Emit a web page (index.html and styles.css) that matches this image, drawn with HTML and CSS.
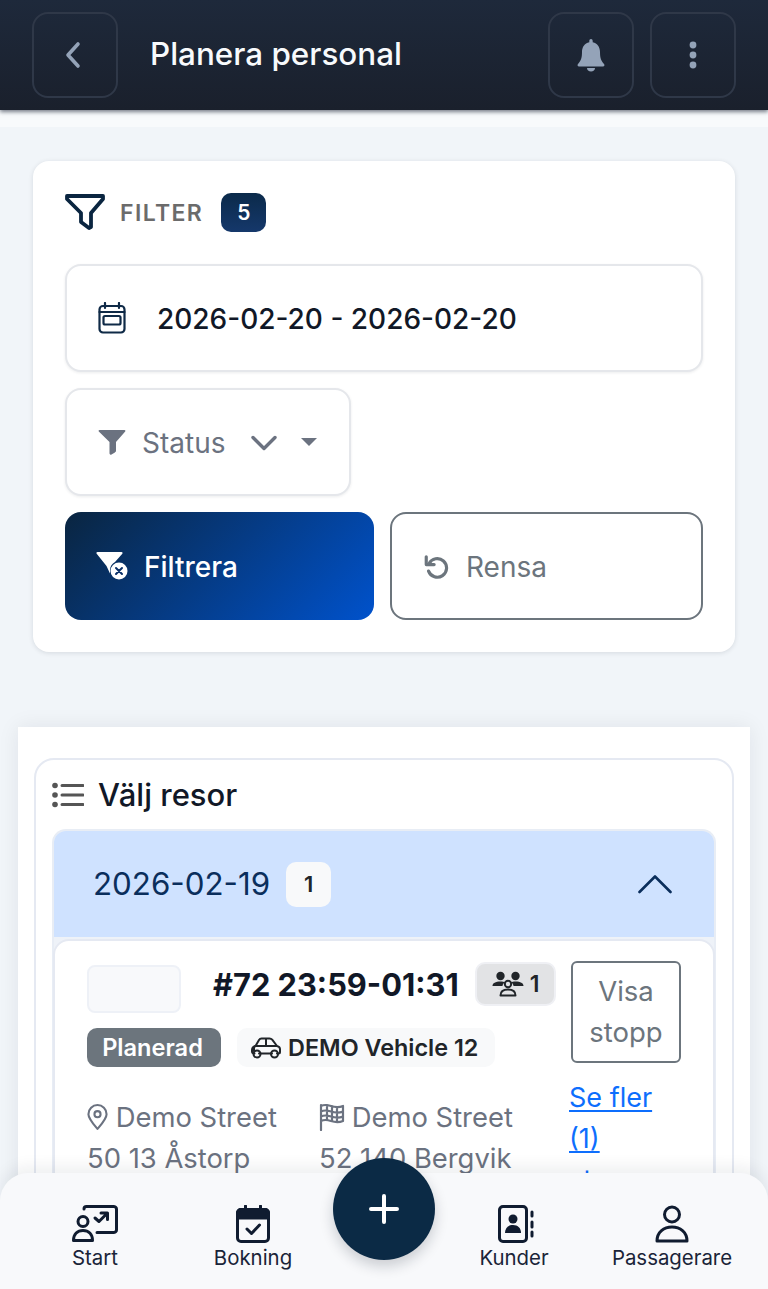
FILE: index.html
```html
<!DOCTYPE html>
<html lang="sv">
<head>
<meta charset="utf-8">
<title>Planera personal</title>
<link rel="stylesheet" href="styles.css">
</head>
<body>
<div class="app">
  <header class="topbar">
    <button class="icon-btn"><svg class="i-back" viewBox="0 0 16 28"><path d="M13 3 3 14l10 11"/></svg></button>
    <h1 class="page-title">Planera personal</h1>
    <button class="icon-btn"><svg class="i-bell" viewBox="0 0 30 34"><path d="M15 1c1 0 1.700.8 1.700 2v1.300C21.500 5.300 24 9.400 24 14c0 6 1 8.500 4 12 .9 1.100.4 2.500-1 2.500H3c-1.400 0-1.900-1.400-1-2.500 3-3.500 4-6 4-12 0-4.600 2.500-8.700 7.300-9.700V3c0-1.200.7-2 1.700-2Z"/><path d="M11 30h8c0 2-1.700 3.500-4 3.500s-4-1.500-4-3.500Z"/></svg></button>
    <button class="icon-btn"><svg class="i-dots" viewBox="0 0 8 28"><circle cx="4" cy="4" r="3.400"/><circle cx="4" cy="14" r="3.400"/><circle cx="4" cy="24" r="3.400"/></svg></button>
  </header>
  <div class="strip"></div>

  <section class="filter-card">
    <div class="filter-head">
      <svg class="i-funnel" viewBox="0 0 40 40"><path d="M2 3h36v3L26 20v14l-2 1-8-6V20L2 6Z"/></svg>
      <span class="filter-label">FILTER</span>
      <span class="count-badge">5</span>
    </div>
    <div class="field date-field">
      <svg class="i-cal" viewBox="0 0 28 32"><path d="M7 1v5M21 1v5"/><rect x="1.500" y="4" width="25" height="26.500" rx="3.500"/><path d="M1.500 10h25"/><rect x="5.500" y="14" width="17" height="8.500" rx="1.500"/></svg>
      <span class="date-text">2026-02-20 - 2026-02-20</span>
    </div>
    <div class="field status-field">
      <svg class="i-solid-funnel" viewBox="0 0 28 26"><path d="M1.500 1h25c.8 0 1.200 1 .7 1.600L18 13v9c0 .7-.6 1-1.100 1.400l-3.800 2.400c-1 0-1.600-.6-1.600-1.500V13L.8 2.600C.3 2 .7 1 1.500 1Z"/></svg>
      <span class="status-text">Status</span>
      <svg class="i-chev" viewBox="0 0 26 16"><path d="M2 2.500 13 13.500 24 2.500"/></svg>
      <span class="caret"></span>
    </div>
    <div class="actions">
      <button class="btn btn-primary">
        <svg class="i-filter-x" viewBox="0 0 32 30"><path d="M1.500 1h24c1 0 1.400 1 .8 1.800L19 11c-3 1.500-5 4.500-5 8v3.500L10.500 15 .7 2.800C.1 2 .5 1 1.500 1Z" class="fill-white"/><circle cx="23" cy="20" r="8.500" class="fill-white"/><path d="m20 17 6 6m0-6-6 6" class="x-stroke"/></svg>
        <span class="btn-label">Filtrera</span>
      </button>
      <button class="btn btn-outline">
        <svg class="i-undo" viewBox="0 0 28 28"><path d="M6.500 11.500A10 10 0 1 1 6 19.500"/><path d="M3.500 4v8.500H12"/></svg>
        <span class="btn-label">Rensa</span>
      </button>
    </div>
  </section>

  <section class="panel">
    <div class="panel-inner">
      <h2 class="panel-title">
        <svg class="i-list" viewBox="0 0 32 26"><circle cx="3" cy="3.500" r="2.800"/><circle cx="3" cy="13" r="2.800"/><circle cx="3" cy="22.500" r="2.800"/><path d="M10 3.500h21M10 13h21M10 22.500h21"/></svg>
        Välj resor
      </h2>
      <div class="accordion">
        <div class="acc-head">
          <span class="acc-date">2026-02-19</span>
          <span class="acc-count">1</span>
          <svg class="i-up" viewBox="0 0 34 20"><path d="M1.500 18 17 2.500 32.500 18"/></svg>
        </div>
        <article class="trip">
          <div class="trip-main">
            <div class="trip-top">
              <div class="thumb"></div>
              <span class="trip-title">#72 23:59-01:31</span>
              <span class="pax">
                <svg class="i-people" viewBox="0 0 32 26"><circle cx="8.500" cy="5" r="4.200" class="solid"/><circle cx="23.500" cy="5" r="4.200" class="solid"/><path d="M.5 15c0-3 3-4.500 8-4.500 2 0 3.500.3 4.500.8-1.500 1-2.500 2.300-2.500 3.700Z" class="solid"/><path d="M31.500 15c0-3-3-4.500-8-4.500-2 0-3.500.3-4.500.8 1.500 1 2.500 2.300 2.500 3.700Z" class="solid"/><circle cx="16" cy="13" r="3.200" class="line"/><path d="M8.500 24.500c0-4 3-6 7.500-6s7.500 2 7.500 6Z" class="line"/></svg>
                1
              </span>
            </div>
            <div class="trip-tags">
              <span class="status-pill">Planerad</span>
              <span class="vehicle">
                <svg class="i-car" viewBox="0 0 30 22"><path d="M3 14V11c0-1 .5-1.500 1.500-2L8 3c.6-1 1.500-1.500 2.500-1.500h8c1 0 2 .4 2.700 1.200L26 9c2 .6 3 1.500 3 3v3c0 1-.6 1.500-1.500 1.500H26M8 16.500h13M3.500 16.500C2.500 16.500 1 16 1 14.500V13c0-1.500 1-3 3-4h22M15 2v7"/><circle cx="6" cy="17" r="3.500"/><circle cx="23.500" cy="17" r="3.500"/></svg>
                DEMO Vehicle 12
              </span>
            </div>
            <div class="stops">
              <div class="stop stop-from">
                <svg class="i-pin" viewBox="0 0 22 28"><path d="M11 26.500C6 20.500 1.500 15.500 1.500 11a9.500 9.500 0 0 1 19 0c0 4.500-4.500 9.500-9.500 15.500Z"/><circle cx="11" cy="11" r="3.200"/></svg>
                Demo Street<br>50 13 Åstorp
              </div>
              <div class="stop">
                <svg class="i-flag" viewBox="0 0 26 28"><path d="M2 27V2M2 3c4-2 7-1 10 0s7 2 12 0v15c-5 2-9 1-12 0s-6-2-10 0M2 8.500c4-2 7-1 10 0s7 2 12 0M2 13.500c4-2 7-1 10 0s7 2 12 0M8 2v15M13 3v15M18 4v15"/></svg>
                Demo Street<br>52 140 Bergvik
              </div>
            </div>
          </div>
          <div class="trip-side">
            <button class="stops-btn">Visa stopp</button>
            <a class="more-link" href="#">Se fler (1)</a>
            <a class="more-link" href="#">stopp</a>
          </div>
        </article>
      </div>
    </div>
  </section>

  <nav class="bottom-nav">
    <a class="nav-item">
      <svg class="nav-icon" viewBox="0 0 46 38"><path d="M12 4V4c0-1.500 1-2.500 2.500-2.500h27c1.500 0 3 1 3 2.500v21c0 1.500-1.500 2.500-3 2.500H25"/><path d="m23 13 4 3.500 8-8M29 8h6.500v6.500"/><circle cx="11" cy="16.500" r="5"/><path d="M1.500 35.500c0-6.500 4-10 9.500-10s9.500 3.500 9.500 10Z"/></svg>
      <span>Start</span>
    </a>
    <a class="nav-item">
      <svg class="nav-icon" viewBox="0 0 34 38"><path d="M9.500 1v6M24.500 1v6"/><rect x="1.500" y="4.500" width="31" height="32" rx="3.500"/><path class="cal-head" d="M1.500 8c0-2 1.500-3.500 3.500-3.500h24c2 0 3.500 1.500 3.500 3.500v5h-31Z"/><path d="m11 24 4.500 4.500L23.500 20"/></svg>
      <span>Bokning</span>
    </a>
    <span class="nav-spacer"></span>
    <a class="nav-item">
      <svg class="nav-icon" viewBox="-4 0 40 38"><rect x="1.500" y="1.500" width="27" height="35" rx="3.500"/><circle cx="15" cy="14" r="4.500" class="solid"/><path d="M7 28c0-5 3-8 8-8s8 3 8 8Z" class="solid"/><path d="M34 7v4M34 17v5M34 27v4"/></svg>
      <span>Kunder</span>
    </a>
    <a class="nav-item">
      <svg class="nav-icon" viewBox="0 0 34 38"><circle cx="17" cy="9.500" r="7.500"/><path d="M2 36c0-9 7-14 15-14s15 5 15 14Z"/></svg>
      <span>Passagerare</span>
    </a>
  </nav>
  <button class="fab"><svg class="i-plus" viewBox="0 0 30 30"><path d="M15 2v26M2 15h26"/></svg></button>
</div>
</body>
</html>
```
FILE: styles.css
```css
* { box-sizing: border-box; }
html, body { margin: 0; height: 100%; }
body { font-family: Inter, "Liberation Sans", sans-serif; background: #f1f5f9; color: #0f172a; }
button { font-family: inherit; cursor: pointer; }
svg { display: block; flex: none; fill: none; stroke: currentColor; stroke-linecap: round; stroke-linejoin: round; }

.app { position: relative; width: 768px; height: 1289px; overflow: hidden; }

.topbar {
  height: 110px; padding: 12px 32px; display: flex; align-items: center; gap: 16px;
  background: linear-gradient(180deg, #1e293b, #1a202c);
  box-shadow: 0 2px 4px rgba(15, 23, 42, .55);
  position: relative;
}
.icon-btn {
  width: 86px; height: 86px; flex: none; display: flex; align-items: center; justify-content: center;
  background: transparent; border: 2px solid #2f3848; border-radius: 16px; color: #94a3b8; padding: 0;
}
.page-title { flex: 1; margin: -3px 0 0 16px; font-size: 31.400px; font-weight: 500; color: #f8fafc; }
.i-back { width: 16px; height: 28px; stroke-width: 3.600; margin-right: 4px; }
.i-bell { width: 30px; height: 34px; fill: currentColor; stroke: none; }
.i-dots { width: 8px; height: 28px; fill: currentColor; stroke: none; }
.strip { height: 17px; background: #f8fafc; }

.filter-card {
  margin: 34px 33px 0; padding: 32px; height: 491px; background: #fff; border-radius: 16px;
  box-shadow: 0 1px 5px rgba(15, 23, 42, .12);
  display: flex; flex-direction: column; align-items: flex-start;
}
.filter-head { height: 39px; display: flex; align-items: center; }
.i-funnel { width: 40px; height: 40px; stroke: #0a2540; stroke-width: 3.800; }
.filter-label { margin-left: 15px; font-size: 23px; font-weight: 600; letter-spacing: 1.400px; color: #6b6b6b; }
.count-badge {
  margin-left: 18px; width: 45px; height: 39px; border-radius: 10px; display: flex; align-items: center; justify-content: center;
  background: linear-gradient(180deg, #0b2a4a, #15386b); color: #fff; font-size: 21px; font-weight: 600;
}
.field {
  background: #fff; border: 2px solid #e5e7eb; border-radius: 16px; height: 108px; display: flex; align-items: center;
  box-shadow: 0 1px 3px rgba(15, 23, 42, .08);
}
.date-field { margin-top: 32px; width: 638px; padding-left: 31px; font-size: 28px; font-weight: 500; color: #111827; }
.date-text { margin-top: 2px; }
.i-cal { width: 28px; height: 32px; stroke: #0f2a47; stroke-width: 2.200; margin-right: 31px; }
.status-field { margin-top: 16px; width: 286px; padding-left: 31px; color: #6b7280; font-size: 28px; }
.i-solid-funnel { width: 28px; height: 26px; fill: #6b7280; stroke: none; }
.status-text { margin-left: 16px; margin-top: 1px; }
.i-chev { width: 26px; height: 16px; margin-left: 26px; margin-top: 2px; stroke: #6b7280; stroke-width: 3.400; }
.caret { margin-left: 24px; border: 8px solid transparent; border-top-color: #6b7280; border-bottom: 0; }

.actions { margin-top: 16px; display: flex; gap: 16px; width: 638px; }
.btn { flex: 1; height: 108px; border-radius: 16px; display: flex; align-items: center; padding: 0 31px; font-size: 28px; line-height: 34px; }
.btn-label { margin-top: 2px; }
.btn-primary { border: 0; color: #fff; background: linear-gradient(135deg, #0a2540, #0052cc); font-weight: 500; }
.btn-outline { background: #fff; border: 2px solid #6c757d; color: #6c757d; }
.i-filter-x { width: 32px; height: 30px; margin-right: 16px; }
.fill-white { fill: #fff; stroke: none; }
.x-stroke { stroke: #0a3068; stroke-width: 2; }
.i-undo { width: 26px; height: 26px; margin-right: 17px; stroke-width: 3.400; }

.panel {
  margin: 75px 18px 0; padding: 31px 16px; height: 700px; background: #fff;
  box-shadow: 0 0 20px rgba(15, 23, 42, .08);
}
.panel-inner { border: 2px solid #e5e9f2; border-radius: 20px; padding: 14px 16px; height: 650px; }
.panel-title { margin: 0 0 14px; height: 41px; display: flex; align-items: center; gap: 14px; font-size: 31px; font-weight: 500; color: #111827; }
.i-list { width: 32px; height: 26px; color: #555; stroke-width: 3; fill: none; }
.i-list circle { fill: #555; stroke: none; }
.accordion { border: 2px solid #e8edf5; border-bottom: 0; border-radius: 14px 14px 0 0; background: #eef2f8; }
.acc-head {
  height: 106px; padding: 0 42px 0 39px; display: flex; align-items: center; background: #cfe2ff;
  border-radius: 12px 12px 0 0;
}
.acc-date { font-size: 31.300px; color: #0a2e5c; }
.acc-count {
  margin-left: 16px; width: 45px; height: 45px; border-radius: 10px; background: #f8f9fa; display: flex; align-items: center; justify-content: center;
  font-size: 22px; font-weight: 600; color: #212529;
}
.i-up { width: 34px; height: 20px; margin-left: auto; stroke: #0a2e5c; stroke-width: 2.600; }

.trip {
  margin: 2px -1px 0; height: 400px; padding: 21px 32px 0 32px; background: #fff; border: 2px solid #e5e9f2; border-radius: 16px 16px 0 0;
  display: flex; gap: 13px;
}
.trip-main { width: 469px; flex: none; }
.trip-top { display: flex; align-items: flex-start; height: 66px; }
.thumb { margin-top: 3px; width: 94px; height: 48px; border: 2px solid #eef1f7; border-radius: 8px; background: #f8f9fb; }
.trip-title { margin-left: 32px; font-size: 30.800px; line-height: 46px; font-weight: 700; color: #111827; white-space: nowrap; }
.pax {
  margin-left: auto; width: 81px; height: 44px; display: flex; align-items: center; justify-content: center; gap: 6px;
  background: #e2e3e5; border: 2px solid #eff0f4; border-radius: 10px; font-size: 23px; font-weight: 600; color: #212529;
}
.i-people { width: 32px; height: 26px; }
.solid { fill: currentColor; stroke: none; }
.line { stroke-width: 2; }
.trip-tags { display: flex; gap: 16px; align-items: center; }
.status-pill { width: 134px; height: 39px; padding-right: 3px; border-radius: 10px; background: #6c757d; color: #fff; font-size: 23.600px; font-weight: 600; display: flex; align-items: center; justify-content: center; }
.vehicle { width: 258px; height: 39px; border-radius: 10px; background: #f8f9fa; color: #212529; font-size: 23.400px; font-weight: 600; display: flex; align-items: center; padding-left: 14px; gap: 7px; white-space: nowrap; }
.i-car { width: 30px; height: 22px; stroke-width: 2; }
.stops { margin-top: 30px; display: flex; }
.stop { width: 232px; font-size: 27.400px; line-height: 41px; color: #6b7280; white-space: nowrap; }
.stop svg { display: inline-block; vertical-align: -4px; color: #6b7280; stroke-width: 2.200; }
.i-pin { width: 21px; height: 28px; }
.i-flag { width: 26px; height: 28px; margin-right: -1px; }

.trip-side { width: 112px; flex: none; margin-top: -1px; }
.stops-btn {
  display: block; margin-left: 2px; width: 110px; height: 102px; padding: 0 8px; background: #fff; border: 2px solid #6c757d; border-radius: 6px;
  color: #6c757d; font-size: 27.500px; line-height: 41px;
}
.more-link { display: block; color: #0d6efd; font-size: 27px; line-height: 41px; text-decoration: underline; text-underline-offset: 3px; }
.stops-btn + .more-link { margin-top: 14px; }

.bottom-nav {
  position: absolute; left: 0; right: 0; bottom: 0; height: 116px; padding-top: 32px;
  display: grid; grid-template-columns: 190px 126px 136px 124px 1fr; justify-items: center;
  background: #f8f9fb; border-radius: 28px 28px 0 0; box-shadow: 0 -6px 16px rgba(15, 23, 42, .07);
}
.nav-item { display: flex; flex-direction: column; align-items: center; gap: 2px; font-size: 20.400px; line-height: 26px; color: #1a2438; }
.nav-icon { height: 38px; width: auto; stroke: #101c30; stroke-width: 3; }
.nav-icon .solid { fill: #101c30; stroke: none; }
.cal-head { fill: #101c30; }
.fab {
  position: absolute; left: 333px; top: 1158px; width: 102px; height: 102px; padding: 0; border: 0; border-radius: 50%;
  background: #0b2a45; display: flex; align-items: center; justify-content: center; box-shadow: 0 6px 14px rgba(15, 23, 42, .2);
}
.i-plus { width: 30px; height: 30px; stroke: #fff; stroke-width: 4; }
```
